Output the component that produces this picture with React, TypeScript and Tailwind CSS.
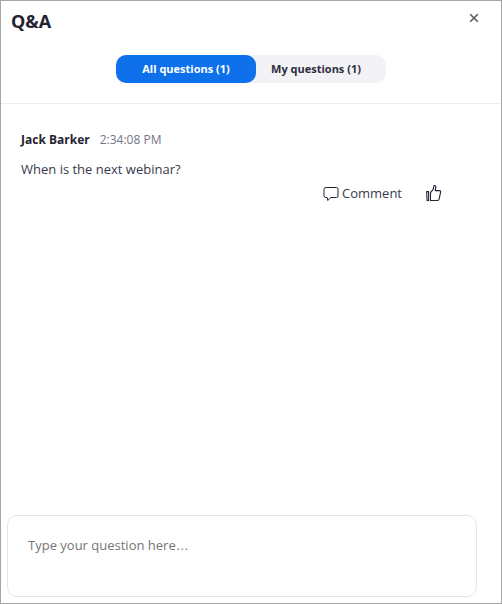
import React, { useState } from 'react';

const questions = [
  {
    id: 1,
    author: 'Jack Barker',
    time: '2:34:08 PM',
    text: 'When is the next webinar?',
  },
];

const CloseIcon = () => (
  <svg width="10" height="10" viewBox="0 0 10 10" fill="none">
    <path d="M1.2 1.2L8.8 8.8M8.8 1.2L1.2 8.8" stroke="#5c5c5c" strokeWidth="1.6" />
  </svg>
);

const CommentIcon = () => (
  <svg width="16" height="18" viewBox="0 0 16 18" fill="none">
    <path
      d="M2.9 3.5h10.6a1.5 1.5 0 0 1 1.5 1.5v7a1.5 1.5 0 0 1-1.5 1.5H7.9L4.7 16.5 4.2 13.5H2.9A1.9 1.9 0 0 1 1 11.6V5.4a1.9 1.9 0 0 1 1.9-1.9z"
      stroke="#232333"
      strokeLinejoin="round"
    />
  </svg>
);

const ThumbIcon = () => (
  <svg width="16" height="18" viewBox="0 0 16 18" fill="none">
    <path
      d="M0.6 7.6h2v8.9H1.1zM4.5 8.6L7.2 5.3 7.9 1.9C8.2 1.2 9.8 1.5 9.8 2.8L9.3 6.6H13.6C14.5 6.6 14.8 7.2 14.6 8.1L13.1 15.2C12.9 16.1 12.5 16.5 11.6 16.5H4.5z"
      stroke="#232333"
      strokeWidth="1.1"
      strokeLinejoin="round"
    />
  </svg>
);

const App: React.FC = () => {
  const [tab, setTab] = useState('all');

  return (
    <div className="flex h-[604px] w-[502px] flex-col border border-[#a6a6a6] bg-white font-['Open_Sans',sans-serif] text-[#232333]">
      <header className="h-[103px] border-b border-[#ededed]">
        <div className="flex h-[54px] items-start justify-between pl-2.5 pr-[22px]">
          <h1 className="pt-[8px] text-[18px] leading-6 font-bold">Q&amp;A</h1>
          <button className="mt-3" aria-label="Close">
            <CloseIcon />
          </button>
        </div>
        <div className="ml-[115px] flex h-7 w-[270px] rounded-[10px] bg-[#f2f2f7] text-[11px] font-bold text-[#2d2d3d]">
          <button
            onClick={() => setTab('all')}
            className={`w-[140px] rounded-[10px] ${tab === 'all' ? 'bg-[#0e71eb] text-white' : ''}`}
          >
            All questions (1)
          </button>
          <button
            onClick={() => setTab('mine')}
            className={`w-[130px] rounded-[10px] pr-[10px] ${tab === 'mine' ? 'bg-[#0e71eb] text-white' : ''}`}
          >
            My questions (1)
          </button>
        </div>
      </header>

      <main className="flex-1 px-5 pt-[27px]">
        {questions.map((q) => (
          <div key={q.id}>
            <div className="flex items-center gap-2.5 text-[12px] leading-[18px]">
              <span className="font-bold">{q.author}</span>
              <span className="text-[#747487]">{q.time}</span>
            </div>
            <p className="mt-[10px] text-[13px] leading-5 text-[#39394d]">{q.text}</p>
            <div className="mt-1 flex h-5 items-center justify-end pr-[39px] text-[13px] leading-5 text-[#39394d]">
              <button className="flex items-center gap-[3px]">
                <CommentIcon />
                <span>Comment</span>
              </button>
              <button className="ml-6" aria-label="Upvote">
                <ThumbIcon />
              </button>
            </div>
          </div>
        ))}
      </main>

      <div className="mb-[6px] ml-1.5 h-[82px] w-[470px] rounded-[10px] border border-[#e4e4ed] px-5 py-[19px] text-[13px] leading-5 text-[#757575]">
        Type your question here<span className="font-['Liberation_Sans',sans-serif]">…</span>
      </div>
    </div>
  );
};

export default App;
